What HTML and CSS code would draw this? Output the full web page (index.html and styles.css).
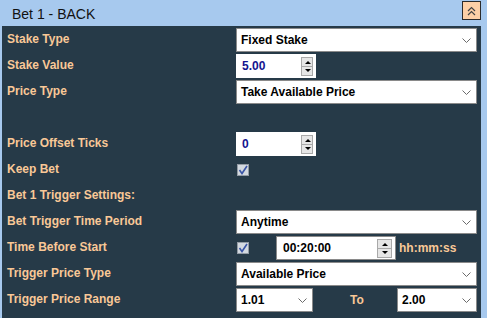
FILE: index.html
```html
<!DOCTYPE html>
<html lang="en">
<head>
  <meta charset="UTF-8" />
  <meta name="viewport" content="width=device-width, initial-scale=1.0"/>
  <title>Bet 1 - BACK</title>
  <link rel="stylesheet" href="styles.css">
</head>
<body>

  <header class="bet-head">
    <span class="bet-title">Bet 1 - BACK</span>
    <button class="toggle" title="Collapse">
      <svg width="9" height="10" viewBox="0 0 9 10"><polyline points="1,5 4.5,1.5 8,5" /><polyline points="1,9 4.5,5.5 8,9" /></svg>
    </button>
  </header>

  <main class="bet-body">
    <div class="label">Stake Type</div>
    <div class="select"><span>Fixed Stake</span><svg class="chev" width="9" height="5" viewBox="0 0 9 5"><polyline points="0.5,0.5 4.5,4.5 8.5,0.5" /></svg></div>

    <div class="label">Stake Value</div>
    <div class="spin"><span class="num">5.00</span><span class="arrows"><i class="up"></i><i class="down"></i></span></div>

    <div class="label">Price Type</div>
    <div class="select"><span>Take Available Price</span><svg class="chev" width="9" height="5" viewBox="0 0 9 5"><polyline points="0.5,0.5 4.5,4.5 8.5,0.5" /></svg></div>

    <div class="blank"></div>

    <div class="label">Price Offset Ticks</div>
    <div class="spin"><span class="num">0</span><span class="arrows"><i class="up"></i><i class="down"></i></span></div>

    <div class="label">Keep Bet</div>
    <div class="cell">
      <svg class="check" width="12" height="12" viewBox="0 0 12 12"><rect x="0.5" y="0.5" width="11" height="11" /><path d="M2.5 6 L5 9.5 L10 2" /></svg>
    </div>

    <div class="label wide">Bet 1 Trigger Settings:</div>

    <div class="label">Bet Trigger Time Period</div>
    <div class="select"><span>Anytime</span><svg class="chev" width="9" height="5" viewBox="0 0 9 5"><polyline points="0.5,0.5 4.5,4.5 8.5,0.5" /></svg></div>

    <div class="label">Time Before Start</div>
    <div class="cell">
      <svg class="check" width="12" height="12" viewBox="0 0 12 12"><rect x="0.5" y="0.5" width="11" height="11" /><path d="M2.5 6 L5 9.5 L10 2" /></svg>
      <div class="spin time"><span>00:20:00</span><span class="arrows"><i class="up"></i><i class="down"></i></span></div>
      <span class="unit">hh:mm:ss</span>
    </div>

    <div class="label">Trigger Price Type</div>
    <div class="select"><span>Available Price</span><svg class="chev" width="9" height="5" viewBox="0 0 9 5"><polyline points="0.5,0.5 4.5,4.5 8.5,0.5" /></svg></div>

    <div class="label">Trigger Price Range</div>
    <div class="cell range">
      <div class="select small"><span>1.01</span><svg class="chev" width="9" height="5" viewBox="0 0 9 5"><polyline points="0.5,0.5 4.5,4.5 8.5,0.5" /></svg></div>
      <span class="to">To</span>
      <div class="select small"><span>2.00</span><svg class="chev" width="9" height="5" viewBox="0 0 9 5"><polyline points="0.5,0.5 4.5,4.5 8.5,0.5" /></svg></div>
    </div>
  </main>

</body>
</html>
```

FILE: styles.css
```css
body {
  margin: 0;
  font-family: "Liberation Sans", Arial, sans-serif;
  background: #a7c9ee;
  height: 318px;
  overflow: hidden;
}

.bet-head {
  height: 26px;
  display: flex;
  align-items: center;
  justify-content: space-between;
  padding: 0 6px 0 12px;
}

.bet-title {
  font-size: 14px;
  color: #111;
  margin-top: 1px;
}

.toggle {
  width: 19px;
  height: 19px;
  margin-top: -5px;
  padding: 0;
  border: 1px solid #2b2b2b;
  background: #fdd0a7;
  display: flex;
  align-items: center;
  justify-content: center;
  cursor: pointer;
}

.toggle svg polyline {
  fill: none;
  stroke: #444;
  stroke-width: 1.2;
}

.bet-body {
  margin: 0 6px 0 2px;
  height: 292px;
  background: #263a48;
  padding: 1px 4px 0 5px;
  display: grid;
  grid-template-columns: 229px 1fr;
  grid-auto-rows: 26px;
  align-items: center;
}

.label {
  color: #f9c897;
  font-size: 12px;
  font-weight: bold;
  margin-top: -2px;
}

.label.wide {
  grid-column: 1 / 3;
}

.blank {
  grid-column: 1 / 3;
}

.select {
  height: 24px;
  box-sizing: border-box;
  border: 1px solid #8a8a8a;
  background: white;
  display: flex;
  align-items: center;
  justify-content: space-between;
  padding: 0 5px 0 4px;
  font-size: 12px;
  font-weight: bold;
  color: #000;
}

.chev polyline {
  fill: none;
  stroke: #6b6b6b;
  stroke-width: 1;
}

.spin {
  width: 80px;
  height: 24px;
  box-sizing: border-box;
  background: white;
  display: flex;
  align-items: center;
  justify-content: space-between;
  padding: 0 3px 0 6px;
  font-size: 12px;
  font-weight: bold;
}

.num {
  color: #14148f;
}

.arrows {
  display: flex;
  flex-direction: column;
  width: 12px;
  height: 19px;
}

.arrows i {
  flex: 1;
  box-sizing: border-box;
  border: 1px solid #a9a9a9;
  background: #e6e6e6;
  position: relative;
}

.arrows i + i {
  border-top: none;
}

.arrows i::after {
  content: "";
  position: absolute;
  left: 3px;
  top: 3px;
  border-left: 3px solid transparent;
  border-right: 3px solid transparent;
}

.arrows .up::after {
  border-bottom: 3px solid #000;
}

.arrows .down::after {
  top: 2px;
  border-top: 3px solid #000;
}

.cell {
  display: flex;
  align-items: center;
}

.check {
  margin-left: 1px;
}

.check rect {
  fill: #d3d9e0;
  stroke: #939ba5;
}

.check path {
  fill: none;
  stroke: #3a55a6;
  stroke-width: 1.6;
}

.spin.time {
  width: 120px;
  margin-left: 27px;
  padding-left: 6px;
  border: 1px solid #8a8a8a;
  color: #000;
}

.spin.time .arrows {
  width: 15px;
  height: 19px;
}

.spin.time .arrows i::after {
  left: 4px;
}

.unit {
  color: #f9c897;
  font-size: 12px;
  font-weight: bold;
  margin-left: 3px;
}

.range {
  justify-content: space-between;
}

.select.small {
  width: 77px;
}

.select.small + .to + .select.small {
  width: 80px;
}

.to {
  color: #f9c897;
  font-size: 12px;
  font-weight: bold;
  margin-left: 4px;
}
```
